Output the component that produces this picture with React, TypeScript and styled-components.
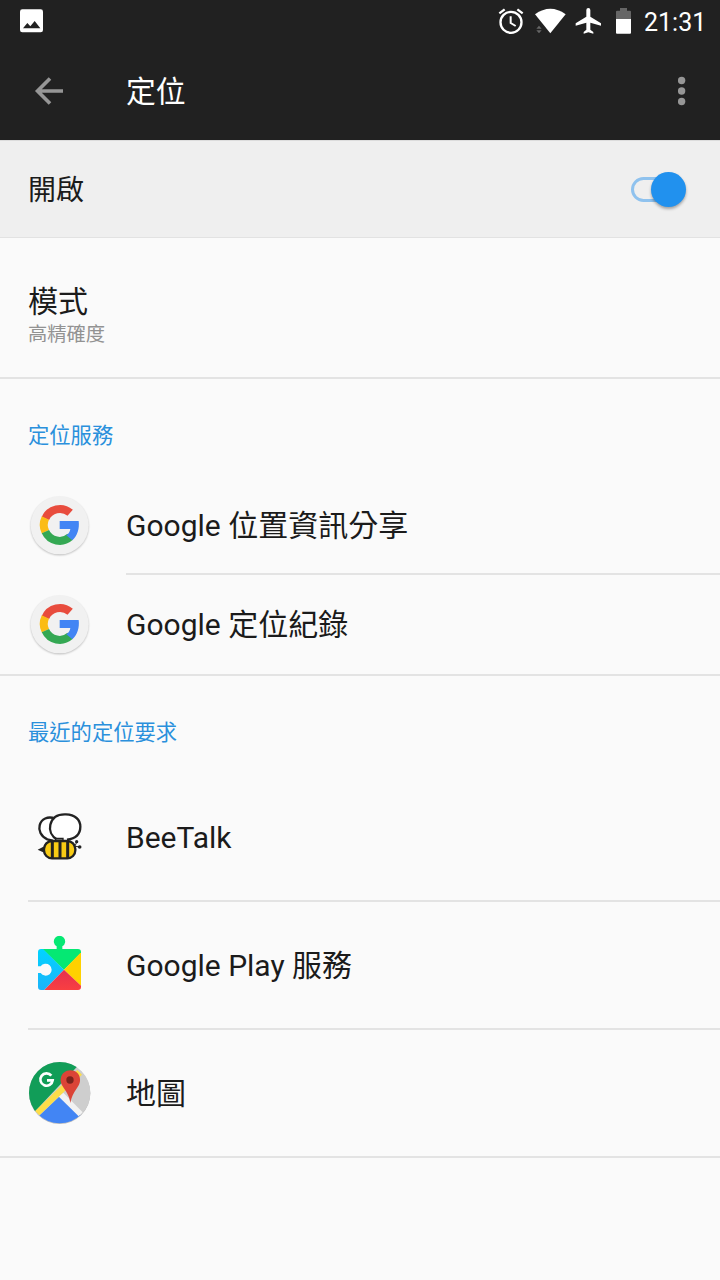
import React from "react";
import styled, { createGlobalStyle } from "styled-components";

const GlobalStyle = createGlobalStyle`
  *, *::before, *::after { box-sizing: border-box; }
  body {
    margin: 0;
    background: #fafafa;
    color: #1b1b1b;
    font-family: Roboto, "Noto Sans CJK TC", sans-serif;
  }
  svg { display: block; flex: none; }
`;

const Screen = styled.main`
  width: 720px;
  height: 1280px;
  overflow: hidden;
  display: flex;
  flex-direction: column;
  background: #fafafa;
`;

const StatusBar = styled.header`
  flex: none;
  height: 42px;
  padding: 0 13px 0 19px;
  display: flex;
  align-items: center;
  background: #212121;
  color: #fff;
`;

const StatusIcon = styled.svg<{ $gap?: number }>`
  height: 42px;
  margin-right: ${(p) => p.$gap ?? 0}px;
`;

const Spacer = styled.div`
  flex: 1;
`;

const Clock = styled.time`
  width: 63px;
  font-size: 25px;
  line-height: 42px;
  padding-top: 3px;
  white-space: nowrap;
`;

const AppBar = styled.nav`
  flex: none;
  height: 98px;
  padding: 0 28px;
  display: flex;
  align-items: center;
  background: #212121;
`;

const IconButton = styled.button<{ $width: number }>`
  width: ${(p) => p.$width}px;
  height: 56px;
  padding: 0;
  border: 0;
  background: none;
  display: flex;
  align-items: center;
`;

const Title = styled.h1`
  flex: 1;
  margin: 0;
  padding-top: 2px;
  font-size: 29.8px;
  line-height: 44px;
  font-weight: 400;
  color: #fff;
`;

const SwitchRow = styled.section`
  flex: none;
  height: 98px;
  padding: 0 28px;
  display: flex;
  align-items: center;
  justify-content: space-between;
  background: #efefef;
  border-top: 1px solid #dcdcdc;
  border-bottom: 1px solid #e2e2e2;
`;

const SwitchLabel = styled.span`
  padding-top: 4px;
  font-size: 28px;
  line-height: 40px;
`;

const Toggle = styled.div`
  width: 64px;
  height: 40px;
  padding: 0 6px 0 3px;
  display: flex;
  align-items: center;
`;

const Track = styled.div`
  flex: none;
  width: 42px;
  height: 25px;
  border: 3px solid #8fc2ee;
  border-radius: 13px;
`;

const Thumb = styled.div`
  flex: none;
  width: 35px;
  height: 35px;
  margin-left: -22px;
  border-radius: 50%;
  background: #2191ee;
  box-shadow: 0 2px 3px rgba(0, 0, 0, 0.32);
`;

const ModeRow = styled.section`
  flex: none;
  height: 141px;
  padding: 40px 28px 0;
  border-bottom: 2px solid #e3e3e3;
`;

const Label = styled.div`
  padding-top: 2px;
  font-size: 30px;
  line-height: 44px;
  white-space: nowrap;
`;

const Summary = styled.div`
  font-size: 19.3px;
  line-height: 22px;
  color: #929292;
`;

const Group = styled.section<{ $bottom?: number }>`
  flex: none;
  padding-bottom: ${(p) => p.$bottom ?? 0}px;
  border-bottom: 2px solid #e3e3e3;
`;

const GroupTitle = styled.h2<{ $height: number }>`
  height: ${(p) => p.$height}px;
  margin: 0;
  padding: 42px 28px 0;
  font-size: 21.3px;
  line-height: 30px;
  font-weight: 400;
  color: #2a90dc;
`;

const Item = styled.div<{ $height: number }>`
  height: ${(p) => p.$height}px;
  padding-left: 28px;
  display: flex;
  align-items: center;
`;

const ItemIcon = styled.svg`
  width: 64px;
  height: 64px;
  margin-right: 34px;
`;

const Divider = styled.hr<{ $inset: number }>`
  height: 2px;
  margin: 0 0 0 ${(p) => p.$inset}px;
  border: 0;
  background: #e3e3e3;
`;

const GoogleIcon = () => (
  <ItemIcon viewBox="54 39 192 192">
    <defs>
      <filter id="soft" x="-20%" y="-20%" width="140%" height="140%">
        <feGaussianBlur stdDeviation="2.5" />
      </filter>
    </defs>
    <circle cx="149" cy="139" r="86" fill="#000" opacity=".3" filter="url(#soft)" />
    <circle cx="149" cy="136" r="87" fill="#f1f1f1" />
    <g fill="none" strokeWidth="24">
      <path d="M180.500 98.500A47 47 0 0 0 106.200 115.600" stroke="#e84c3d" />
      <path d="M106.200 114A47 47 0 0 0 106.200 155.500" stroke="#fbbc15" />
      <path d="M106.200 155A47 47 0 0 0 180.500 170.500" stroke="#34a853" />
    </g>
    <path d="M149 123H206C209 146 202 167 187 181L169 166C175 162 180 155 181 147H149Z" fill="#4285f4" />
  </ItemIcon>
);

const BeeIcon = () => (
  <ItemIcon viewBox="54 15 192 192">
    <g fill="#fff" stroke="#222" strokeWidth="7">
      <path d="M128 122L112 118C92 109 85 91 89 76C94 56 113 48 135 55" />
      <path d="M142 119C124 109 117 91 121 74C127 50 147 42 168 43C195 44 211 59 211 80C211 104 193 116 171 119" />
    </g>
    <path d="M83 149L103 139V158Z" fill="#222" />
    <rect x="102" y="123" width="94" height="52" rx="24" fill="#f8cb14" stroke="#222" strokeWidth="7" />
    <path d="M127 124V175M150 121V175M173 124V175" stroke="#222" strokeWidth="9" />
    <path d="M137 121V115H159V121Z" fill="#777" stroke="#222" strokeWidth="4" />
    <path d="M190 137Q200 136 200 125M193 138L208 141" fill="none" stroke="#222" strokeWidth="3" />
    <circle cx="200" cy="125" r="5" fill="#222" />
    <circle cx="209" cy="141" r="5.500" fill="#222" />
  </ItemIcon>
);

const PlayServicesIcon = () => (
  <ItemIcon viewBox="54 39 192 192">
    <defs>
      <clipPath id="piece">
        <path d="M93 87H140V79A17 17 0 1 1 157 79V87H204Q213 87 213 96V201Q213 210 204 210H93Q84 210 84 201V159H92A18 18 0 1 0 92 139H84V96Q84 87 93 87Z" />
      </clipPath>
      <linearGradient id="blue" x1="0" y1="0" x2="0" y2="1">
        <stop stopColor="#00d5ff" />
        <stop offset="1" stopColor="#1cb2fa" />
      </linearGradient>
      <linearGradient id="red" x1="0" y1="0" x2="0" y2="1">
        <stop stopColor="#e5304e" />
        <stop offset="1" stopColor="#fa4041" />
      </linearGradient>
    </defs>
    <g clipPath="url(#piece)">
      <path d="M80 84H98L162 149L99 214H80Z" fill="url(#blue)" />
      <path d="M98 88V40H216V96L162 149L99 87Z" fill="#05e873" />
      <path d="M216 94V201L162 149Z" fill="#ffd100" />
      <path d="M162 149L216 200V214H99Z" fill="url(#red)" />
    </g>
  </ItemIcon>
);

const MapsIcon = () => (
  <ItemIcon viewBox="54 48 192 192">
    <defs>
      <clipPath id="globe">
        <circle cx="149" cy="143" r="92" />
      </clipPath>
    </defs>
    <circle cx="149" cy="145" r="92" fill="#bbb" />
    <g clipPath="url(#globe)">
      <path d="M50 45H250V240H50Z" fill="#cecece" />
      <path d="M50 45H220L55 220Z" fill="#119d58" />
      <path d="M149 154L78 221V240H222V220Z" fill="#4285f4" />
      <path d="M160 143L218 202L206 214L145 154Z" fill="#f2f2f2" />
      <path d="M202 75L216 89L88 211L75 199Z" fill="#fddd49" />
    </g>
    <path d="M124 92A18.500 18.500 0 1 0 128 106H111" fill="none" stroke="#fff" strokeWidth="8" />
    <path d="M181 174C178 151 168 140 158 124C153 116 151 109 152 101C155 85 167 76 181 76C196 76 209 86 210 102C211 115 205 123 199 132C190 146 184 156 181 174Z" fill="#db4437" />
    <circle cx="180" cy="105" r="11" fill="#7b231c" />
  </ItemIcon>
);

const services = ["Google 位置資訊分享", "Google 定位紀錄"];

const requests = [
  { name: "BeeTalk", Icon: BeeIcon },
  { name: "Google Play 服務", Icon: PlayServicesIcon },
  { name: "地圖", Icon: MapsIcon },
];

export default function App() {
  return (
    <>
      <GlobalStyle />
      <Screen>
        <StatusBar>
          <StatusIcon width="26" viewBox="57 0 78 126">
            <path
              fill="#fff"
              fillRule="evenodd"
              d="M67 28H122Q129 28 129 35V90Q129 97 122 97H67Q60 97 60 90V35Q60 28 67 28ZM69 85H121L104 63L91 79L82 69Z"
            />
          </StatusIcon>
          <Spacer />
          <StatusIcon width="26" viewBox="24 0 78 126" $gap={10}>
            <g fill="none" stroke="#fff" strokeWidth="7">
              <circle cx="63" cy="67" r="31.500" />
              <path d="M28 40L44 28M98 40L82 28" />
              <path d="M62 49V69L77 78" strokeWidth="6" />
            </g>
          </StatusIcon>
          <StatusIcon width="33" viewBox="132 0 99 126" $gap={8}>
            <path d="M135 43Q181 10 227 43L181 100Z" fill="#fff" />
            <path d="M139 86L147 77L155 86ZM139 91H155L147 100Z" fill="#666" />
          </StatusIcon>
          <StatusIcon width="27" viewBox="255 0 81 126" $gap={13}>
            <path
              fill="#fff"
              d="M333 77V70L301 50V30Q301 24 295 24Q289 24 289 30V50L257 70V77L289 68V89L281 96V101L295 97L310 101V96L301 89V68Z"
            />
          </StatusIcon>
          <StatusIcon width="17" viewBox="375 0 51 126" $gap={12}>
            <path d="M378 57V35Q378 32 381 32H390V24H411V32H420Q423 32 423 35V57Z" fill="#666" />
            <path d="M378 57H423V98Q423 101 420 101H381Q378 101 378 98Z" fill="#fff" />
          </StatusIcon>
          <Clock>21:31</Clock>
        </StatusBar>

        <AppBar>
          <IconButton $width={98} aria-label="返回">
            <svg width="42" height="42" viewBox="0 0 42 42" fill="none" stroke="#969696" strokeWidth="3.600">
              <path d="M35 21H10M22 8.500L9.500 21L22 33.500" />
            </svg>
          </IconButton>
          <Title>定位</Title>
          <IconButton $width={14} aria-label="更多選項">
            <svg width="14" height="42" viewBox="0 0 14 42" fill="#969696">
              <circle cx="3.600" cy="10.500" r="3.700" />
              <circle cx="3.600" cy="21" r="3.700" />
              <circle cx="3.600" cy="31.500" r="3.700" />
            </svg>
          </IconButton>
        </AppBar>

        <SwitchRow>
          <SwitchLabel>開啟</SwitchLabel>
          <Toggle role="switch" aria-checked="true">
            <Track />
            <Thumb />
          </Toggle>
        </SwitchRow>

        <ModeRow>
          <Label>模式</Label>
          <Summary>高精確度</Summary>
        </ModeRow>

        <Group $bottom={1}>
          <GroupTitle $height={97}>定位服務</GroupTitle>
          {services.map((name, i) => (
            <React.Fragment key={name}>
              {i > 0 && <Divider $inset={126} />}
              <Item $height={i === 0 ? 97 : 98}>
                <GoogleIcon />
                <Label>{name}</Label>
              </Item>
            </React.Fragment>
          ))}
        </Group>

        <Group>
          <GroupTitle $height={98}>最近的定位要求</GroupTitle>
          {requests.map(({ name, Icon }, i) => (
            <React.Fragment key={name}>
              {i > 0 && <Divider $inset={28} />}
              <Item $height={126}>
                <Icon />
                <Label>{name}</Label>
              </Item>
            </React.Fragment>
          ))}
        </Group>
      </Screen>
    </>
  );
}
